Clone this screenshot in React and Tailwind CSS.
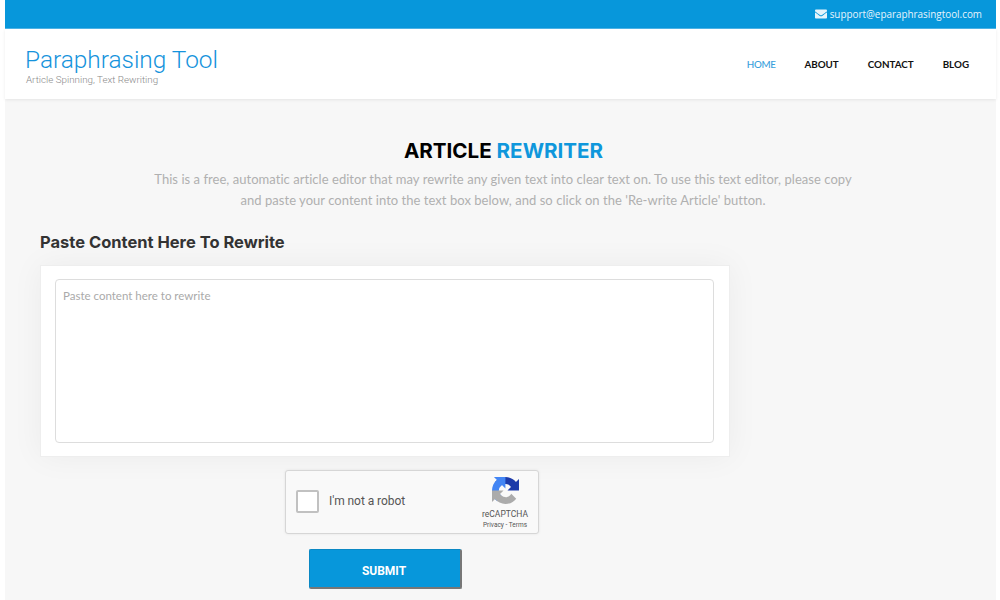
import { FaEnvelope } from "react-icons/fa";

function RecaptchaLogo() {
  return (
    <svg width="27" height="27" viewBox="0 0 64 64" fill="none">
      <path d="M64 31.955l-.033-1.37V4.687l-7.16 7.16C50.948 4.674 42.033.093 32.05.093c-10.4 0-19.622 4.96-25.458 12.64l11.736 11.86a15.55 15.55 0 0 1 4.754-5.334c2.05-1.6 4.952-2.906 8.968-2.906.485 0 .86.057 1.135.163 4.976.393 9.288 3.14 11.828 7.124l-8.307 8.307c10.522-.04 22.4-.066 27.295.006" fill="#1c3aa9" />
      <path d="M31.862.094l-1.37.033H4.594l7.16 7.16C4.58 13.147 0 22.06 0 32.046c0 10.4 4.96 19.622 12.64 25.458l11.86-11.736a15.55 15.55 0 0 1-5.334-4.754c-1.6-2.05-2.906-4.952-2.906-8.968 0-.485.057-.86.163-1.135.393-4.976 3.14-9.288 7.124-11.828l8.307 8.307c-.04-10.522-.066-22.4.006-27.295" fill="#4285f4" />
      <path d="M.001 32.045l.033 1.37v25.898l7.16-7.16c5.86 7.173 14.774 11.754 24.76 11.754 10.4 0 19.622-4.96 25.458-12.64L45.677 39.53a15.55 15.55 0 0 1-4.754 5.334c-2.05 1.6-4.952 2.906-8.968 2.906-.485 0-.86-.057-1.135-.163-4.976-.393-9.288-3.14-11.828-7.124l8.307-8.307c-10.522.04-22.4.066-27.295-.006" fill="#ababab" />
    </svg>
  );
}

export default function App() {
  return (
    <div className="h-[600px] overflow-hidden bg-white pl-[5px] pr-[4px] font-['Lato','Open_Sans',sans-serif]">
      {/* Top bar */}
      <div className="h-[29px] bg-[#0797db] border-b border-[#4db5e8] flex items-center justify-end pr-[14px]">
        <FaEnvelope size={12} className="mr-[3px] text-[#e6f4fb]" />
        <span className="text-[9.9px] font-['Open_Sans',sans-serif] text-[#e6f4fb]">support@eparaphrasingtool.com</span>
      </div>

      {/* Header */}
      <header className="h-[70px] bg-white flex items-center justify-between pl-[20px] pr-[27px] relative shadow-[0_1px_3px_rgba(0,0,0,0.08)]">
        <div className="pt-[3px]">
          <div className="text-[24.4px] leading-[26px] text-[#1593dc] font-['Roboto',sans-serif] font-light">Paraphrasing Tool</div>
          <div className="mt-[1px] pl-[1px] text-[9.8px] leading-[11px] text-[#8a8a8a] font-['Roboto',sans-serif] font-light">Article Spinning, Text Rewriting</div>
        </div>
        <nav className="flex items-center gap-[29px] text-[9.8px] font-bold">
          <a className="text-[#3a9fdc] font-medium tracking-[-0.4px]">HOME</a>
          <a className="text-[#111]">ABOUT</a>
          <a className="text-[#111]">CONTACT</a>
          <a className="text-[#111]">BLOG</a>
        </nav>
      </header>

      {/* Main */}
      <main className="bg-[#f7f7f7] h-[501px] pt-[38px]">
        <h1 className="pl-[6px] text-center text-[20.6px] leading-[27px] font-bold text-black font-['Inter',sans-serif]">
          ARTICLE <span className="text-[#0f97dc]">REWRITER</span>
        </h1>
        <p className="mt-[5px] ml-[138px] w-[720px] text-center text-[13px] tracking-[0.04px] leading-[21px] text-[#b0b0b0]">
          This is a free, automatic article editor that may rewrite any given text into clear text on. To use this text editor, please copy
          <br />
          and paste your content into the text box below, and so click on the 'Re-write Article' button.
        </p>

        <div className="ml-[35px] w-[690px]">
          <h2 className="mt-[20px] text-[16.5px] leading-[22px] font-bold text-[#333] font-['Inter',sans-serif]">Paste Content Here To Rewrite</h2>
          <div className="mt-[12px] bg-white pt-[13px] pb-[13px] pl-[14px] pr-[15px] border border-[#eee] shadow-[0_0_30px_rgba(0,0,0,0.05)]">
            <div className="h-[164px] border border-[#ddd] rounded-[4px] px-[7px] py-[9px] text-[11.5px] leading-[14px] text-[#aaa]">
              Paste content here to rewrite
            </div>
          </div>
        </div>

        {/* Captcha */}
        <div className="mt-[13px] ml-[280px] w-[254px] h-[64px] bg-[#f9f9f9] border border-[#d6d6d6] rounded-[3px] shadow-[0_0_3px_rgba(0,0,0,0.08)] flex items-center pl-[10px] pr-[10px] font-['Roboto',sans-serif]">
          <div className="mb-[2px] w-[23px] h-[23px] bg-white border-2 border-[#c1c1c1] rounded-[2px]"></div>
          <span className="mb-[2px] ml-[10px] text-[12px] tracking-[-0.05px] text-[#555]">I'm not a robot</span>
          <div className="ml-auto pt-[3px] flex flex-col items-center w-[46px]">
            <RecaptchaLogo />
            <span className="text-[8.5px] leading-[10px] mt-[5px] text-[#555]">reCAPTCHA</span>
            <span className="text-[6.5px] leading-[9px] mt-[2px] text-[#555]">Privacy - Terms</span>
          </div>
        </div>

        {/* Submit */}
        <button className="block mt-[15px] ml-[304px] w-[153px] h-[40px] pt-[4px] pr-[2px] bg-[#0797db] border border-[#0a88c4] border-b-2 border-r-2 border-b-[#777] border-r-[#777] rounded-[2px] text-white text-[12px] font-bold font-['Roboto',sans-serif]">
          SUBMIT
        </button>
      </main>
    </div>
  );
}
